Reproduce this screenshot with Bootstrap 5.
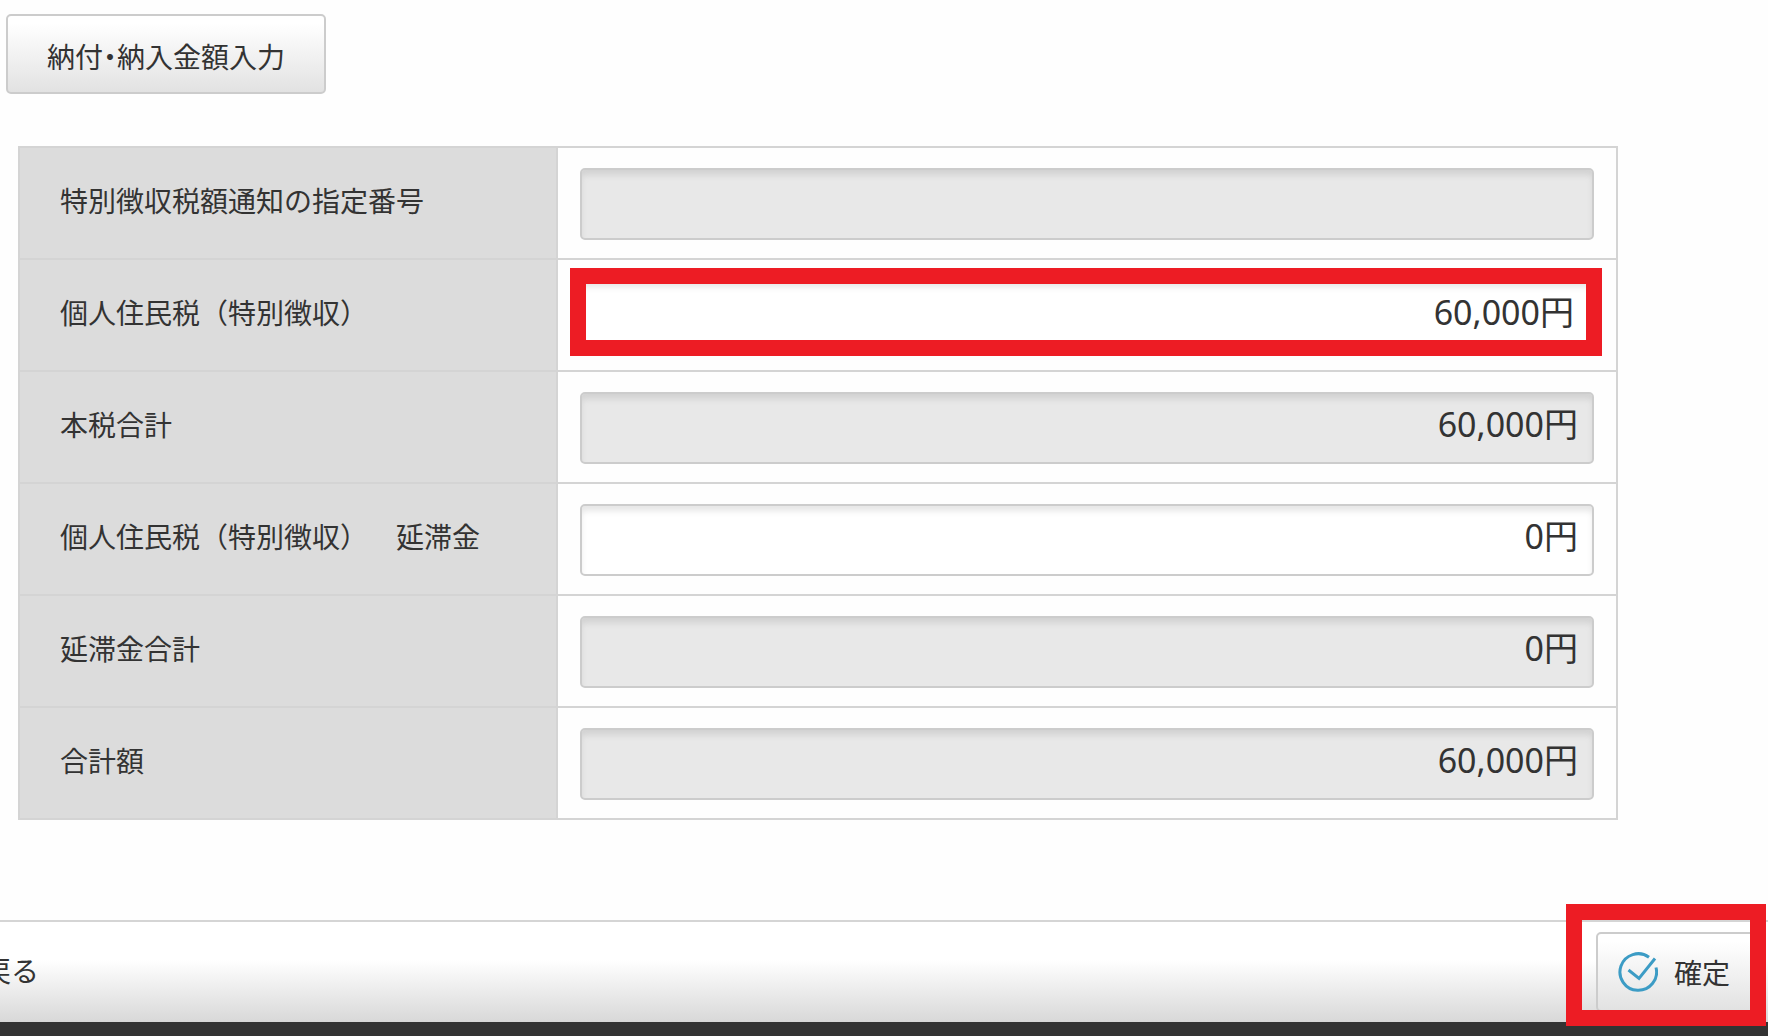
<!DOCTYPE html>
<html lang="ja">
<head>
<meta charset="utf-8">
<meta name="viewport" content="width=device-width, initial-scale=1">
<title>納付・納入金額入力</title>
<link href="https://cdn.jsdelivr.net/npm/bootstrap@5.3.0/dist/css/bootstrap.min.css" rel="stylesheet">
<style>
  body { font-family: "Noto Sans CJK JP", sans-serif; font-size: 28px; line-height: 40px; color: #333; overflow-x: hidden; background: #fefefe; text-spacing-trim: space-all; }
  .btn-soft { font-size: 28px; line-height: 40px; color: #333; border: 2px solid #ccc; border-radius: 5px; background: linear-gradient(#fff 10%, #e2e2e2); height: 80px; }
  .btn-soft:hover { background: #eee; border-color: #bbb; }
  .tab-btn { padding: 4px 39px 0; font-feature-settings: "palt"; }
  .page-top { padding: 14px 6px 0; }
  .amounts { margin: 52px 150px 0 18px; }
  .amounts table { border-collapse: separate; border-spacing: 0; border: 2px solid #d4d4d4; border-top: 0; table-layout: fixed; }
  .amounts th { width: 538px; background: #dcdcdc; font-weight: 400; padding: 0 20px 6px 40px; border-top: 2px solid #d4d4d4; border-right: 2px solid #d4d4d4; vertical-align: middle; }
  .amounts td { padding: 20px 22px 18px; border-top: 2px solid #d4d4d4; background: #fefefe; }
  .amount-input { height: 72px; font-family: "Noto Sans", "Noto Sans CJK JP", sans-serif; font-size: 34px; line-height: 48px; color: #333; text-align: right; border: 2px solid #ccc; border-radius: 5px; padding: 0 14px 12px; background: #fff; box-shadow: inset 0 6px 6px -1px #e6e6e6; }
  .amount-input[readonly] { background: #e8e8e8; box-shadow: inset 0 6px 6px -1px #d2d2d2; }
  .marked .amount-input { padding-right: 18px; }
  .mark-box { position: absolute; border: 16px solid #ed1c24; pointer-events: none; }
  .mark-field { inset: 8px 14px 14px 12px; }
  .action-bar { margin-top: 100px; height: 102px; border-top: 2px solid #d5d5d5; background: linear-gradient(#fff 38%, #d8d8d8); padding: 10px 2px 0 0; }
  .back-link { margin: 18px 0 0 -17px; height: 40px; color: #333; }
  .confirm-wrap { padding-left: 30px; }
  .confirm-btn { padding: 0 30px 0 20px; width: 170px; white-space: nowrap; }
  .mark-confirm { inset: -28px 0 -14px 0; }
  .foot-strip { height: 14px; background: #333; }
</style>
<script src="https://cdn.jsdelivr.net/npm/bootstrap@5.3.0/dist/js/bootstrap.bundle.min.js"></script>
</head>
<body>
<header class="page-top">
  <button type="button" class="btn btn-soft tab-btn">納付・納入金額入力</button>
</header>
<main class="amounts">
  <table class="w-100">
    <tbody>
      <tr>
        <th scope="row"><label for="f1">特別徴収税額通知の指定番号</label></th>
        <td><input id="f1" type="text" class="form-control amount-input" value="" readonly></td>
      </tr>
      <tr>
        <th scope="row"><label for="f2">個人住民税（特別徴収）</label></th>
        <td class="position-relative marked"><input id="f2" type="text" class="form-control amount-input" value="60,000円"><span class="mark-box mark-field"></span></td>
      </tr>
      <tr>
        <th scope="row"><label for="f3">本税合計</label></th>
        <td><input id="f3" type="text" class="form-control amount-input" value="60,000円" readonly></td>
      </tr>
      <tr>
        <th scope="row"><label for="f4">個人住民税（特別徴収）　延滞金</label></th>
        <td><input id="f4" type="text" class="form-control amount-input" value="0円"></td>
      </tr>
      <tr>
        <th scope="row"><label for="f5">延滞金合計</label></th>
        <td><input id="f5" type="text" class="form-control amount-input" value="0円" readonly></td>
      </tr>
      <tr>
        <th scope="row"><label for="f6">合計額</label></th>
        <td><input id="f6" type="text" class="form-control amount-input" value="60,000円" readonly></td>
      </tr>
    </tbody>
  </table>
</main>
<footer>
  <div class="action-bar d-flex justify-content-between align-items-start">
    <a href="#" class="back-link text-decoration-none">戻る</a>
    <div class="confirm-wrap position-relative">
      <button type="button" class="btn btn-soft confirm-btn d-flex align-items-center gap-3">
        <svg class="flex-shrink-0" width="40" height="40" viewBox="0 0 40 40" fill="none" stroke="#3c9cc5" stroke-width="3" aria-hidden="true">
          <path d="M31 5.200A18.300 18.300 0 1 0 38 15.500"/>
          <path d="M10.500 18L21 26.500L37 6.500"/>
        </svg>
        <span>確定</span>
      </button>
      <span class="mark-box mark-confirm"></span>
    </div>
  </div>
  <div class="foot-strip"></div>
</footer>
</body>
</html>
